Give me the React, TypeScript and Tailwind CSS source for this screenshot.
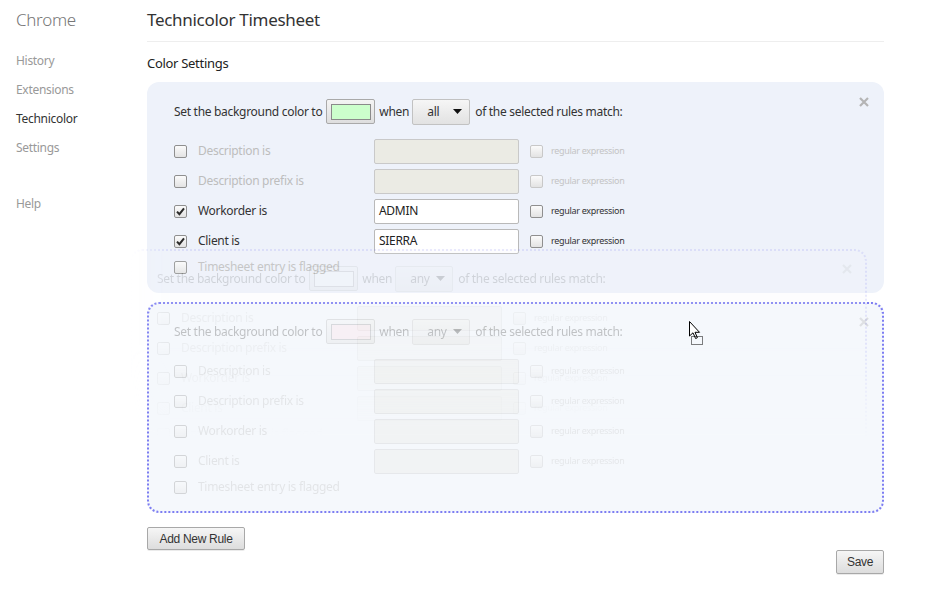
import React from 'react'

type Row = { label: string; checked: boolean; value?: string; input?: boolean }

const rulesA: Row[] = [
  { label: 'Description is', checked: false, input: true },
  { label: 'Description prefix is', checked: false, input: true },
  { label: 'Workorder is', checked: true, value: 'ADMIN', input: true },
  { label: 'Client is', checked: true, value: 'SIERRA', input: true },
  { label: 'Timesheet entry is flagged', checked: false },
]

const rulesB: Row[] = [
  { label: 'Description is', checked: false, input: true },
  { label: 'Description prefix is', checked: false, input: true },
  { label: 'Workorder is', checked: false, input: true },
  { label: 'Client is', checked: false, input: true },
  { label: 'Timesheet entry is flagged', checked: false },
]

function Checkbox({ checked, dim }: { checked?: boolean; dim?: boolean }) {
  return (
    <span
      className={`flex h-[13px] w-[13px] shrink-0 items-center justify-center rounded-[2px] border bg-gradient-to-b from-[#fbfbfb] to-[#e3e3e3] ${
        dim ? 'border-[#c8c8c8]' : 'border-[#8f8f8f]'
      }`}
    >
      {checked && (
        <svg width="9" height="9" viewBox="0 0 9 9">
          <path d="M1 4.6 L3.4 7.2 L8 1.4" fill="none" stroke="#2b2b2b" strokeWidth="2" />
        </svg>
      )}
    </span>
  )
}

function RuleCard({
  color,
  match,
  rows,
  dropTarget,
  faded,
}: {
  color: string
  match: string
  rows: Row[]
  dropTarget?: boolean
  faded?: boolean
}) {
  return (
    <div
      className={`relative h-[211px] rounded-[12px] border-2 ${
        dropTarget ? 'border-dotted border-[#7d7df2] bg-[#f5f8fc]' : 'border-transparent bg-[#eef2fa]'
      }`}
    >
      <div className={`px-[25px] pt-[14px] ${faded ? 'opacity-[0.32]' : ''}`}>
        <div className="flex h-[27px] items-center text-[#333]">
          <span>Set the background color to</span>
          <span className="ml-[4px] flex h-[25px] w-[49px] items-center justify-center rounded-[2px] border border-[#a9a9a9] bg-gradient-to-b from-[#f4f4f4] to-[#dedede]">
            <span className="h-[16px] w-[40px] border border-[#8a8a8a]" style={{ backgroundColor: color }} />
          </span>
          <span className="ml-[4px]">when</span>
          <span className="ml-[3px] flex h-[26px] w-[58px] items-center justify-between rounded-[2px] border border-[#c2c2c2] bg-gradient-to-b from-[#f6f6f6] to-[#e2e2e2] pl-[14px] pr-[7px]">
            <span>{match}</span>
            <svg width="9" height="5" viewBox="0 0 9 5">
              <path d="M0 0 H9 L4.5 5 Z" fill="#111" />
            </svg>
          </span>
          <span className="ml-[5px]">of the selected rules match:</span>
        </div>
        <div className="mt-[11px]">
          {rows.map((r) => {
            const active = r.checked
            return (
              <div key={r.label} className={`flex items-center ${r.input ? 'h-[30px]' : 'h-[22px]'}`}>
                <Checkbox checked={r.checked} />
                <span className={`ml-[11px] w-[176px] whitespace-nowrap ${active ? 'text-[#333]' : 'text-[#bdbdbd]'}`}>
                  {r.label}
                </span>
                {r.input && (
                  <>
                    <span
                      className={`flex h-[25px] w-[145px] items-center rounded-[2px] border px-[4px] ${
                        active ? 'border-[#b9b9b9] bg-white text-[#222]' : 'border-[#c9c9c9] bg-[#ebebe4]'
                      }`}
                    >
                      {r.value}
                    </span>
                    <span className="ml-[11px]">
                      <Checkbox dim={!active} />
                    </span>
                    <span
                      className={`ml-[8px] text-[9px] tracking-[-0.3px] ${active ? 'text-[#333]' : 'text-[#c4c4c4]'}`}
                    >
                      regular expression
                    </span>
                  </>
                )}
              </div>
            )
          })}
        </div>
      </div>
      <svg
        className={`absolute right-[13px] top-[13px] ${faded ? 'opacity-40' : ''}`}
        width="10"
        height="10"
        viewBox="0 0 10 10"
      >
        <path d="M1 1 L9 9 M9 1 L1 9" stroke="#b4b4b4" strokeWidth="2.2" />
      </svg>
    </div>
  )
}

function Cursor() {
  return (
    <svg className="pointer-events-none absolute left-[689px] top-[321px] z-20" width="18" height="26" viewBox="0 0 18 26">
      <path d="M0.5 0.5 V15 L4 11.8 L6.6 17.5 L8.4 16.7 L6 11.3 H10.5 Z" fill="#fff" stroke="#000" strokeWidth="1" />
      <rect x="2.5" y="15.5" width="11" height="8" fill="none" stroke="#000" strokeWidth="1" strokeDasharray="1 1" />
    </svg>
  )
}

export default function App() {
  return (
    <div
      className="relative flex min-h-[612px] w-[946px] bg-white text-[12px] tracking-[-0.3px]"
      style={{ fontFamily: '"Noto Sans", "Open Sans", sans-serif' }}
    >
      <aside className="w-[147px] shrink-0 pl-[16px] pt-[7px]">
        <div className="text-[17px] font-light text-[#777]">Chrome</div>
        <nav className="mt-[19px] flex flex-col text-[#999]">
          <span className="h-[29px]">History</span>
          <span className="h-[29px]">Extensions</span>
          <span className="h-[29px] text-[#333]">Technicolor</span>
          <span className="h-[29px]">Settings</span>
          <span className="mt-[27px]">Help</span>
        </nav>
      </aside>
      <main className="w-[737px] pt-[7px]">
        <h1 className="border-b border-[#eeeeee] pb-[8px] text-[17px] text-[#333]">Technicolor Timesheet</h1>
        <h2 className="mt-[12px] text-[13px] text-[#222]">Color Settings</h2>
        <div className="mt-[9px] flex flex-col gap-[9px]">
          <RuleCard color="#ccffcc" match="all" rows={rulesA} />
          <div className="relative">
            <RuleCard color="#ffdde6" match="any" rows={rulesB} dropTarget faded />
            <div className="pointer-events-none absolute left-[-17px] top-[-53px] z-10 w-[737px] opacity-[0.16] [mask-composite:intersect] [mask-image:linear-gradient(to_bottom,black_45%,transparent_90%),linear-gradient(to_right,transparent_0px,black_40px)]">
              <RuleCard color="#ffffff" match="any" rows={rulesB} dropTarget />
            </div>
          </div>
        </div>
        <div className="mt-[14px] flex flex-col" style={{ fontFamily: '"Liberation Sans", Arial, sans-serif' }}>
          <button className="h-[23px] w-[98px] rounded-[2px] border border-[#a8a8a8] bg-gradient-to-b from-[#f6f6f6] to-[#dddddd] text-[12px] tracking-[-0.3px] text-[#333] shadow-[0_1px_0_rgba(0,0,0,0.08)]">
            Add New Rule
          </button>
          <button className="ml-auto h-[24px] w-[48px] rounded-[2px] border border-[#a8a8a8] bg-gradient-to-b from-[#f6f6f6] to-[#dddddd] text-[12px] tracking-[-0.3px] text-[#333] shadow-[0_1px_0_rgba(0,0,0,0.08)]">
            Save
          </button>
        </div>
      </main>
      <Cursor />
    </div>
  )
}
